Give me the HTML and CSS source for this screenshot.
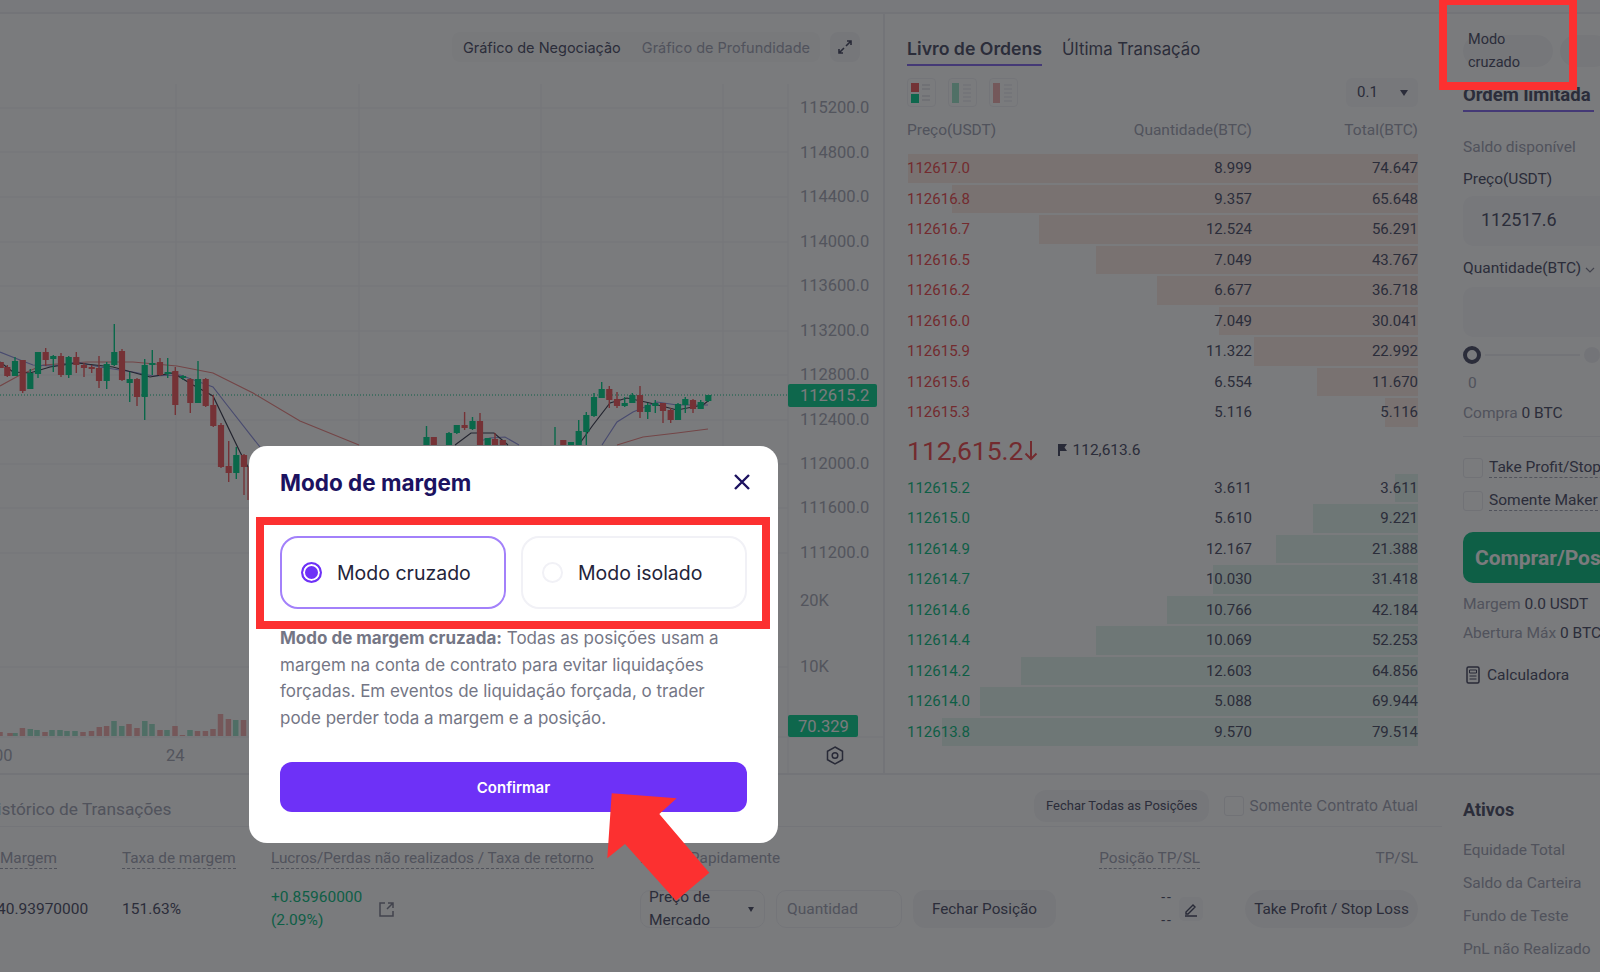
FILE: index.html
```html
<!DOCTYPE html>
<html lang="pt">
<head>
    <meta charset="UTF-8">
    <meta name="viewport" content="width=device-width, initial-scale=1.0">
    <title>Modo de margem</title>
    <link rel="stylesheet" href="styles.css">
</head>
<body>
    <div class="page">
        <div class="topbar"></div>

        <!-- Gráfico -->
        <section class="chart-panel">
            <div class="chart-head">
                <div class="chart-tabs">
                    <span class="chart-tab active">Gráfico de Negociação</span>
                    <span class="chart-tab">Gráfico de Profundidade</span>
                </div>
                <button class="expand">
                    <svg width="16" height="16" viewBox="0 0 16 16"><path d="M9 7l5-5M10 2h4v4M7 9l-5 5M2 10v4h4" fill="none" stroke="#55566e" stroke-width="1.6"/></svg>
                </button>
            </div>
            <svg class="chart" viewBox="0 84 885 689" width="885" height="689">
                <path class="grid" d="M176 84V737M359 84V737M541 84V737M723 84V737M0 108H788M0 152H788M0 197H788M0 242H788M0 286H788M0 331H788M0 375H788M0 420H788M0 464H788M0 508H788M0 553H788M0 667H788M0 737H885M788 84V773"/>
                <path class="vol-up" d="M15 736v-3M30.300 736v-7M37 736v-6M52 736v-6M60 736v-6M67 736v-5M75 736v-5M114 736v-15M121.800 736v-10M144.800 736v-15M152 736v-12M167 736v-6M190 736v-6M235.700 736v-16"/>
                <path class="vol-down" d="M0 736v-4M10 736v-3M22.400 736v-8M45 736v-4M83 736v-4M91.500 736v-5M99.300 736v-9M106.600 736v-10M129 736v-12M137 736v-8M160 736v-6M175 736v-10M182.400 736v-1M197.500 736v-5M205.400 736v-5M213 736v-7M220.500 736v-22M228.400 736v-17M243.500 736v-16"/>
                <path class="price-line" d="M0 395H788"/>
                <!-- médias móveis -->
                <path class="ma-red" d="M0 386L20 375 43 365 87 362 133 362 177 366 213 373 253 393 300 421 359 445M617 445L643 437 677 433 708 429"/>
                <path class="ma-blue" d="M0 352L20 360 33 365 53 366 77 362 100 367 133 372 153 376 180 375 213 387 227 405 260 447M477 442L490 438 505 437 519 445M602 445L617 422 633 412 657 402 677 405 708 405"/>
                <path class="ma-black" d="M0 362L13 372 30 373 50 367 77 363 113 367 150 377 173 373 193 385 213 396 240 452 248 467M455 445L471 433 494 433 508 445M580 443L593 425 610 403 627 398 650 403 677 410 703 405 708 401"/>
                <!-- velas -->
                <path class="wick-up" d="M15 357V376M30.300 369V389M38 352V378M53.300 355V372M68.700 356V378M106.700 362V389M114.300 324V366M129.700 372V402M144.700 359V420M152.300 350V375M167.700 358V378M183 375V380M198 361V403M236.300 447V479M426.500 426V445M449 432V445M456.800 425V434M472.500 417V430M487.700 438V445M555 427V445M578.700 420V445M586.300 412V445M594 393V417M601.700 382V398M624.700 397V407M632.300 393V403M647.700 403V419M655.300 400V413M678 403V420M685.300 397V413M700.700 400V409M708.300 395V402"/>
                <path class="body-up" d="M15 361V376M30.300 373V389M38 352V374M53.300 356V359M68.700 357V375M106.700 364V381M114.300 352V365M129.700 379V383M144.700 365V397M152.300 363V365M167.700 372V374M183 376V378M198 379V403M236.300 455V473M426.500 437V445M449 433V445M456.800 425V433M472.500 421V429M487.700 438V445M571 442V445M578.700 431V445M586.300 415V432M594 397V416M601.700 389V398M624.700 403V406M632.300 395V403M647.700 405V412M655.300 403V406M678 404V420M685.300 399V405M700.700 402V409M708.300 395V401"/>
                <path class="wick-down" d="M7.300 365V377M22.700 360V393M45.700 348V366M61 353V377M76.300 352V373M84 363V377M91.700 365V373M99 356V388M122 349V381M137 378V406M160 358V376M175.300 367V415M190.300 378V413M205.700 378V407M213.300 395V427M221 423V468M228.700 441V482M244 454V495M248 467V500M464.600 412V430M480 413V445M495 433V445M609.300 386V408M617 392V408M640 386V418M663 403V423M670.700 408V423M693 399V413"/>
                <path class="body-down" d="M0.700 362V368M7.300 367V376M22.700 360V391M45.700 352V360M61 356V375M76.300 357V365M84 365V368M91.700 367V369M99 368V381M122 351V380M137 379V397M160 362V375M175.300 371V405M190.300 379V403M205.700 379V406M213.300 405V426M221 425V467M228.700 466V473M244 455V467M433.800 437V445M464.600 425V428M480 421V445M495 439V445M502.800 440V445M563.300 440V445M609.300 389V400M617 399V406M640 395V412M663 403V411M670.700 410V420M693 400V409"/>
                <g class="axis">
                    <text x="800" y="113">115200.0</text>
                    <text x="800" y="158">114800.0</text>
                    <text x="800" y="202">114400.0</text>
                    <text x="800" y="247">114000.0</text>
                    <text x="800" y="291">113600.0</text>
                    <text x="800" y="336">113200.0</text>
                    <text x="800" y="380">112800.0</text>
                    <text x="800" y="425">112400.0</text>
                    <text x="800" y="469">112000.0</text>
                    <text x="800" y="513">111600.0</text>
                    <text x="800" y="558">111200.0</text>
                    <text x="800" y="606">20K</text>
                    <text x="800" y="672">10K</text>
                    <text x="-6" y="761">00</text>
                    <text x="166" y="761">24</text>
                </g>
                <rect class="tag" x="788" y="384" width="89" height="23" rx="2"/>
                <text class="tag-text" x="800" y="401">112615.2</text>
                <rect class="tag" x="788" y="715" width="70" height="22" rx="2"/>
                <text class="tag-text" x="798" y="732">70.329</text>
                <path class="gear" d="M835 747l7.500 4.300v8.400l-7.500 4.300-7.500-4.300v-8.400z"/>
                <circle class="gear" cx="835" cy="755.500" r="2.800"/>
            </svg>
        </section>

        <!-- Livro de ordens -->
        <section class="book-panel">
            <div class="book-tabs">
                <span class="book-tab active">Livro de Ordens</span>
                <span class="book-tab">Última Transação</span>
            </div>
            <div class="book-tools">
                <span class="view-btn"><svg width="29" height="29" viewBox="0 0 29 29"><rect x="4" y="5" width="8" height="9" fill="#f0696c"/><rect x="4" y="16" width="8" height="9" fill="#1fd69c"/><path d="M15 7h8M15 11h8M15 18h8M15 22h8" stroke="#e3e3ea" stroke-width="1.500"/></svg></span>
                <span class="view-btn"><svg width="29" height="29" viewBox="0 0 29 29"><rect x="4" y="5" width="7" height="20" fill="#a8e8d0"/><path d="M15 7h8M15 11h8M15 15h8M15 19h8M15 23h8" stroke="#eeeef3" stroke-width="1.500"/></svg></span>
                <span class="view-btn"><svg width="29" height="29" viewBox="0 0 29 29"><rect x="4" y="5" width="7" height="20" fill="#f3b6b6"/><path d="M15 7h8M15 11h8M15 15h8M15 19h8M15 23h8" stroke="#eeeef3" stroke-width="1.500"/></svg></span>
                <span class="step-select">0.1<i class="caret"></i></span>
            </div>
            <div class="book-row book-head">
                <span>Preço(USDT)</span><span>Quantidade(BTC)</span><span>Total(BTC)</span>
            </div>
            <div class="book-list asks">
                <div class="book-row"><i class="depth" style="width:510px"></i><span>112617.0</span><span>8.999</span><span>74.647</span></div>
                <div class="book-row"><i class="depth" style="width:466px"></i><span>112616.8</span><span>9.357</span><span>65.648</span></div>
                <div class="book-row"><i class="depth" style="width:379px"></i><span>112616.7</span><span>12.524</span><span>56.291</span></div>
                <div class="book-row"><i class="depth" style="width:322px"></i><span>112616.5</span><span>7.049</span><span>43.767</span></div>
                <div class="book-row"><i class="depth" style="width:261px"></i><span>112616.2</span><span>6.677</span><span>36.718</span></div>
                <div class="book-row"><i class="depth" style="width:199px"></i><span>112616.0</span><span>7.049</span><span>30.041</span></div>
                <div class="book-row"><i class="depth" style="width:164px"></i><span>112615.9</span><span>11.322</span><span>22.992</span></div>
                <div class="book-row"><i class="depth" style="width:101px"></i><span>112615.6</span><span>6.554</span><span>11.670</span></div>
                <div class="book-row"><i class="depth" style="width:33px"></i><span>112615.3</span><span>5.116</span><span>5.116</span></div>
            </div>
            <div class="book-mid">
                <span class="last-price">112,615.2</span>
                <svg width="16" height="24" viewBox="0 0 16 24"><path d="M8 3v18M2.500 15.500L8 21l5.500-5.500" fill="none" stroke="#f0595c" stroke-width="2"/></svg>
                <svg class="flag" width="10" height="12" viewBox="0 0 10 12"><path d="M1 0h9L7.500 3.500 10 7H3v5H1z" fill="#55566e"/></svg>
                <span class="mark-price">112,613.6</span>
            </div>
            <div class="book-list bids">
                <div class="book-row"><i class="depth" style="width:23px"></i><span>112615.2</span><span>3.611</span><span>3.611</span></div>
                <div class="book-row"><i class="depth" style="width:105px"></i><span>112615.0</span><span>5.610</span><span>9.221</span></div>
                <div class="book-row"><i class="depth" style="width:142px"></i><span>112614.9</span><span>12.167</span><span>21.388</span></div>
                <div class="book-row"><i class="depth" style="width:205px"></i><span>112614.7</span><span>10.030</span><span>31.418</span></div>
                <div class="book-row"><i class="depth" style="width:251px"></i><span>112614.6</span><span>10.766</span><span>42.184</span></div>
                <div class="book-row"><i class="depth" style="width:322px"></i><span>112614.4</span><span>10.069</span><span>52.253</span></div>
                <div class="book-row"><i class="depth" style="width:397px"></i><span>112614.2</span><span>12.603</span><span>64.856</span></div>
                <div class="book-row"><i class="depth" style="width:438px"></i><span>112614.0</span><span>5.088</span><span>69.944</span></div>
                <div class="book-row"><i class="depth" style="width:476px"></i><span>112613.8</span><span>9.570</span><span>79.514</span></div>
            </div>
        </section>

        <!-- Formulário de ordem -->
        <section class="form-panel">
            <div class="mode-row">
                <span class="mode-pill">Modo cruzado</span>
                <span class="mode-pill next"></span>
            </div>
            <div class="order-tab">Ordem limitada</div>
            <p class="muted balance">Saldo disponível</p>
            <p class="field-label">Preço(USDT)</p>
            <div class="field price">112517.6</div>
            <p class="field-label qty">Quantidade(BTC) <svg width="10" height="6" viewBox="0 0 10 6"><path d="M1 1l4 4 4-4" fill="none" stroke="#8a8b9c" stroke-width="1.200"/></svg></p>
            <div class="field"></div>
            <div class="slider"><i class="knob"></i><i class="track"></i><i class="dot"></i></div>
            <p class="muted zero">0</p>
            <p class="muted buy-line">Compra <b>0 BTC</b></p>
            <hr class="form-line">
            <label class="check-row"><i class="check"></i><span class="dashed">Take Profit/Stop Loss</span></label>
            <label class="check-row"><i class="check"></i><span class="dashed">Somente Maker</span></label>
            <button class="buy">Comprar/Posição Longa</button>
            <p class="muted info first">Margem <b>0.0 USDT</b></p>
            <p class="muted info">Abertura Máx <b>0 BTC</b></p>
            <p class="calc">
                <svg width="14" height="18" viewBox="0 0 14 18"><rect x="1" y="1" width="12" height="16" rx="1.500" fill="none" stroke="#55566e" stroke-width="1.500"/><path d="M3.500 4h7v3h-7zM3.500 10h7M3.500 13h7" fill="none" stroke="#55566e"/></svg>
                Calculadora
            </p>
        </section>

        <!-- Posições -->
        <section class="positions-panel">
            <div class="pos-head">
                <span class="pos-title">Histórico de Transações</span>
                <button class="close-all">Fechar Todas as Posições</button>
                <i class="check"></i>
                <span class="only-current">Somente Contrato Atual</span>
            </div>
            <div class="pos-grid pos-labels">
                <span><u>Margem</u></span>
                <span><u>Taxa de margem</u></span>
                <span><u>Lucros/Perdas não realizados / Taxa de retorno</u></span>
                <span>Fechar Rapidamente</span>
                <span class="right"><u>Posição TP/SL</u></span>
                <span class="right">TP/SL</span>
            </div>
            <div class="pos-grid pos-values">
                <span class="margin-value">40.93970000</span>
                <span>151.63%</span>
                <span class="pnl">
                    <span class="pnl-text">+0.85960000<br>(2.09%)</span>
                    <svg width="17" height="17" viewBox="0 0 17 17"><path d="M7 2H2v13h13v-5M9 8l6-6M10 2h5v5" fill="none" stroke="#8a8b9c" stroke-width="1.500"/></svg>
                </span>
                <span class="quick-close">
                    <span class="order-type"><span>Preço de Mercado</span><i class="caret"></i></span>
                    <span class="qty-input">Quantidad</span>
                    <button class="close-pos">Fechar Posição</button>
                </span>
                <span class="tp-cell">
                    <span class="dashes">--<br>--</span>
                    <span class="edit"><svg width="16" height="16" viewBox="0 0 16 16"><path d="M3 11l7-7 2 2-7 7H3zM2 15h12" fill="none" stroke="#55566e" stroke-width="1.400"/></svg></span>
                </span>
                <span class="right"><button class="tp-btn">Take Profit / Stop Loss</button></span>
            </div>
        </section>

        <!-- Ativos -->
        <section class="assets-panel">
            <h3>Ativos</h3>
            <p class="muted">Equidade Total</p>
            <p class="muted">Saldo da Carteira</p>
            <p class="muted">Fundo de Teste</p>
            <p class="muted">PnL não Realizado</p>
        </section>
    </div>

    <div class="overlay"></div>

    <div class="modal">
        <div class="modal-head">
            <h2>Modo de margem</h2>
            <svg width="18" height="18" viewBox="0 0 18 18"><path d="M2 2l14 14M16 2L2 16" stroke="#1c1260" stroke-width="2.400"/></svg>
        </div>
        <div class="mode-options">
            <div class="mode-option selected"><i class="radio"></i>Modo cruzado</div>
            <div class="mode-option"><i class="radio"></i>Modo isolado</div>
        </div>
        <p class="mode-text"><b>Modo de margem cruzada:</b> Todas as posições usam a margem na conta de contrato para evitar liquidações forçadas. Em eventos de liquidação forçada, o trader pode perder toda a margem e a posição.</p>
        <button class="confirm">Confirmar</button>
    </div>

    <!-- Marcações vermelhas -->
    <div class="mark mark-pill"></div>
    <div class="mark mark-options"></div>
    <svg class="arrow" width="115" height="120" viewBox="0 0 115 120"><path d="M11.700 8.300L76.700 13.300 59.300 29 109.300 87.700 76 115.700 25 59 7.300 73.300z" fill="#fc3030"/></svg>
</body>
</html>
```

FILE: styles.css
```css
/* Estilo global */
* {
    box-sizing: border-box;
}

html, body {
    margin: 0;
    height: 100%;
    overflow: hidden;
}

body {
    font-family: 'Inter', 'Liberation Sans', sans-serif;
    font-size: 15px;
    color: #5b5c74;
    background: #fff;
    position: relative;
}

p, h2, h3 {
    margin: 0;
    font-weight: normal;
}

button {
    font-family: inherit;
    border: none;
    cursor: pointer;
}

.page {
    display: grid;
    grid-template-columns: 885px 557px 158px;
    grid-template-rows: 14px 759px 199px;
    height: 972px;
    width: 1600px;
    background: #f1f1f4;
}

.topbar {
    grid-column: 1 / 4;
    background: #fbfbfc;
    border-bottom: 2px solid #f1f1f4;
}

section {
    background: #fff;
    overflow: hidden;
}

/* Gráfico */
.chart-panel {
    margin-right: 2px;
}

.chart-head {
    display: flex;
    justify-content: flex-end;
    align-items: center;
    gap: 10px;
    height: 70px;
    padding: 0 23px 4px 0;
}

.chart-tabs {
    display: flex;
    background: #fafafb;
    border-radius: 8px;
    height: 30px;
    align-items: center;
}

.chart-tab {
    padding: 0 10px;
    color: #a9abbb;
    font-size: 14.500px;
}

.chart-tab.active {
    color: #5b5c74;
    padding: 0 11px;
}

.expand {
    width: 30px;
    height: 30px;
    border-radius: 8px;
    background: #f7f7f9;
    display: flex;
    align-items: center;
    justify-content: center;
    padding: 0;
}

.chart {
    display: block;
}

.grid {
    stroke: #f3f3f6;
    fill: none;
}

.price-line {
    stroke: #1fc48e;
    stroke-dasharray: 1 2;
    fill: none;
}

.vol-up, .vol-down {
    stroke-width: 5.500;
    fill: none;
}

.vol-up {
    stroke: #a5e4cd;
}

.vol-down {
    stroke: #f5b5b5;
}

.ma-red, .ma-blue, .ma-black {
    fill: none;
    stroke-width: 1.200;
}

.ma-red {
    stroke: #f0908f;
}

.ma-blue {
    stroke: #9a9ce2;
}

.ma-black {
    stroke: #4a4b5c;
}

.wick-up, .body-up {
    stroke: #16d795;
    fill: none;
}

.wick-down, .body-down {
    stroke: #f4686c;
    fill: none;
}

.wick-up, .wick-down {
    stroke-width: 1.400;
}

.body-up, .body-down {
    stroke-width: 6.200;
}

.axis text {
    fill: #aeb0bc;
    font-size: 16.500px;
    font-family: 'Roboto', sans-serif;
}

.tag {
    fill: #1ed59a;
}

.tag-text {
    fill: #fff;
    font-size: 16.500px;
    font-family: 'Roboto', sans-serif;
}

.gear {
    fill: none;
    stroke: #55566e;
    stroke-width: 1.500;
}

/* Livro de ordens */
.book-panel {
    padding: 0 24px 0 22px;
}

.book-tabs {
    display: flex;
    gap: 20px;
    height: 52px;
    padding-top: 24px;
}

.book-tab {
    font-size: 16.800px;
    height: 28px;
    line-height: 22px;
    color: #5b5c74;
}

.book-tab.active {
    font-size: 17.700px;
    font-weight: 600;
    border-bottom: 2px solid #8f75f0;
}

.book-tools {
    display: flex;
    gap: 12px;
    height: 29px;
    margin-top: 12px;
    align-items: center;
}

.view-btn {
    width: 29px;
    height: 29px;
    border: 1px solid #f3f3f6;
    border-radius: 4px;
    display: block;
}

.view-btn svg {
    display: block;
    margin: -1px;
}

.step-select {
    margin-left: auto;
    width: 72px;
    height: 29px;
    line-height: 29px;
    padding-left: 11px;
    background: #f9f9fb;
    border-radius: 6px;
    font-family: 'Roboto', sans-serif;
    position: relative;
}

.caret {
    position: absolute;
    right: 10px;
    top: 12px;
    border-left: 4px solid transparent;
    border-right: 4px solid transparent;
    border-top: 6px solid #5b5c74;
}

.book-row {
    display: grid;
    grid-template-columns: 150px 195px 166px;
    align-items: center;
    height: 30.500px;
    position: relative;
    font-family: 'Roboto', sans-serif;
}

.book-row span {
    position: relative;
    text-align: right;
}

.book-row span:first-of-type {
    text-align: left;
}

.depth {
    position: absolute;
    right: 0;
    top: 1px;
    bottom: 1px;
}

.book-head {
    color: #a9abbb;
    font-size: 15.500px;
    margin-top: 7px;
    height: 31px;
    margin-bottom: 8px;
}

.asks .depth {
    background: #fcece7;
}

.bids .depth {
    background: #e6f6f0;
}

.asks span:first-of-type {
    color: #f0595c;
}

.bids span:first-of-type {
    color: #1ec48d;
}

.book-mid {
    display: flex;
    align-items: center;
    height: 41px;
    margin: 2px 0;
    font-family: 'Roboto', sans-serif;
}

.last-price {
    font-size: 26.500px;
    color: #f0595c;
}

.flag {
    margin-left: 18px;
    margin-right: 5px;
}

.mark-price {
    font-size: 15.500px;
}

/* Formulário de ordem */
.form-panel {
    padding: 0 0 0 21px;
    font-family: 'Roboto', sans-serif;
    font-size: 15.500px;
    white-space: nowrap;
}

.mode-row {
    display: flex;
    gap: 7px;
    height: 72px;
    padding-top: 21px;
}

.mode-pill {
    display: flex;
    align-items: center;
    width: 90px;
    height: 32px;
    background: #f7f7f9;
    border-radius: 16px;
    padding: 0 5px;
    white-space: normal;
    line-height: 23px;
    flex: none;
    font-size: 14.500px;
}

.mode-pill.next {
    width: 50px;
}

.order-tab {
    width: 131px;
    height: 26px;
    font-size: 18.500px;
    font-weight: 700;
    border-bottom: 2px solid #8f75f0;
    line-height: 18px;
}

.muted {
    color: #a9abbb;
}

.muted b {
    color: #5b5c74;
    font-weight: normal;
}

.balance {
    margin-top: 26px;
}

.field-label {
    margin-top: 14px;
}

.field-label.qty {
    margin-top: 13px;
}

.field {
    height: 50px;
    margin-top: 8px;
    background: #f9f9fb;
    border-radius: 10px;
    width: 200px;
    padding-left: 18px;
    line-height: 48px;
    font-size: 18px;
}

.field-label.qty + .field {
    margin-top: 10px;
}

.slider {
    display: flex;
    align-items: center;
    height: 18px;
    margin-top: 9px;
    gap: 4px;
}

.knob {
    width: 18px;
    height: 18px;
    border-radius: 50%;
    border: 4px solid #5b5c74;
    flex: none;
}

.track {
    width: 100px;
    height: 2px;
    background: #f1f1f4;
}

.dot {
    width: 16px;
    height: 16px;
    border-radius: 50%;
    background: #f1f1f4;
    flex: none;
}

.zero {
    margin-top: 10px;
    padding-left: 5px;
}

.buy-line {
    margin-top: 12px;
}

.form-line {
    border: none;
    height: 1px;
    background: #f1f1f4;
    margin: 14px 0 21px;
}

.check-row {
    display: flex;
    align-items: center;
    gap: 6px;
    height: 20px;
    margin-bottom: 13px;
}

.check {
    display: block;
    width: 20px;
    height: 20px;
    border: 1px solid #ececf0;
    border-radius: 3px;
    flex: none;
}

.dashed, u {
    text-decoration: none;
    border-bottom: 1px dashed #a9abbb;
    padding-bottom: 1px;
}

.buy {
    display: block;
    width: 220px;
    height: 51px;
    margin-top: 21px;
    background: #1fc48d;
    border-radius: 10px;
    color: #fff;
    font-size: 21px;
    font-weight: 700;
    text-align: left;
    padding-left: 12px;
    white-space: nowrap;
}

.info {
    margin-top: 11px;
}

.info.first {
    margin-top: 12px;
}

.calc {
    display: flex;
    align-items: center;
    gap: 7px;
    margin-top: 24px;
    padding-left: 3px;
}

/* Posições */
.positions-panel {
    grid-column: 1 / 3;
    padding-right: 24px;
    margin-top: 2px;
}

.pos-head {
    display: flex;
    align-items: center;
    height: 52px;
    padding: 10px 24px 0 0;
    border-bottom: 1px solid #f3f3f6;
    margin-right: -24px;
}

.pos-title {
    margin-left: -15px;
    margin-top: 6px;
    font-family: 'Roboto', sans-serif;
    font-size: 17.300px;
    color: #a9abbb;
    margin-right: auto;
}

.close-all {
    height: 32px;
    width: 175px;
    padding: 0;
    background: #f7f7f9;
    border-radius: 12px;
    font-family: 'Roboto', sans-serif;
    font-size: 13px;
    color: #5b5c74;
    margin-right: 15px;
}

.only-current {
    margin-left: 5px;
    font-size: 15px;
    color: #a9abbb;
}

.pos-grid {
    display: grid;
    grid-template-columns: 122px 149px 369px 416px 144px 218px;
    align-items: center;
}

.pos-labels {
    height: 59px;
    padding-top: 3px;
    color: #a9abbb;
    font-size: 15.300px;
    font-family: 'Roboto', sans-serif;
}

.pos-values {
    height: 46px;
    font-family: 'Roboto', sans-serif;
    font-size: 15.500px;
}

.right {
    text-align: right;
}

.margin-value {
    margin-left: -3px;
}

.pnl {
    display: flex;
    align-items: center;
    gap: 16px;
}

.pnl-text {
    color: #1ec48d;
    line-height: 23px;
}

.quick-close {
    display: flex;
    align-items: center;
    gap: 11px;
}

.order-type {
    display: flex;
    align-items: center;
    position: relative;
    width: 125px;
    height: 38px;
    line-height: 23px;
    padding: 0 30px 0 8px;
    border: 1px solid #f3f3f6;
    border-radius: 10px;
}

.order-type .caret {
    top: 16px;
    border-left-width: 3px;
    border-right-width: 3px;
    border-top-width: 5px;
}

.qty-input {
    width: 126px;
    height: 38px;
    line-height: 36px;
    padding-left: 10px;
    border: 1px solid #f3f3f6;
    border-radius: 10px;
    color: #a9abbb;
}

.close-pos {
    width: 143px;
    height: 38px;
    padding: 0;
    background: #f7f7f9;
    border-radius: 12px;
    font-size: 15.300px;
    color: #5b5c74;
}

.tp-cell {
    display: flex;
    justify-content: flex-end;
    align-items: center;
    gap: 6px;
    margin-right: -3px;
}

.dashes {
    line-height: 23px;
    font-size: 14px;
    letter-spacing: 2px;
}

.edit {
    width: 24px;
    height: 24px;
    background: #f9f9fb;
    border-radius: 5px;
    display: flex;
    align-items: center;
    justify-content: center;
}

.tp-btn {
    width: 173px;
    height: 38px;
    padding: 0;
    background: #f7f7f9;
    border-radius: 19px;
    font-size: 15.300px;
    color: #5b5c74;
}

/* Ativos */
.assets-panel {
    padding: 24px 0 0 21px;
    margin-top: 2px;
    font-family: 'Roboto', sans-serif;
    font-size: 15.500px;
    white-space: nowrap;
}

.assets-panel h3 {
    font-size: 18px;
    font-weight: 700;
    margin-bottom: 21px;
}

.assets-panel p {
    height: 33px;
}

/* Modal */
.overlay {
    position: fixed;
    inset: 0;
    background: rgba(0, 2, 5, 0.52);
}

.modal {
    position: absolute;
    left: 249px;
    top: 446px;
    width: 529px;
    height: 397px;
    padding: 0 31px;
    background: #fff;
    border-radius: 18px;
}

.modal-head {
    display: flex;
    justify-content: space-between;
    align-items: center;
    height: 72px;
}

.modal-head h2 {
    font-size: 22.500px;
    font-weight: 700;
    color: #1c1260;
}

.modal-head svg {
    margin-right: -4px;
}

.mode-options {
    display: grid;
    grid-template-columns: 226px 226px;
    gap: 15px;
    margin-top: 18px;
}

.mode-option {
    display: flex;
    align-items: center;
    gap: 15px;
    height: 73px;
    padding-left: 19px;
    border: 2px solid #f1f1f6;
    border-radius: 18px;
    font-size: 19.500px;
    color: #24243a;
}

.mode-option.selected {
    border-color: #a381fa;
}

.radio {
    display: block;
    width: 21px;
    height: 21px;
    border-radius: 50%;
    border: 2px solid #f1f1f6;
}

.selected .radio {
    border-color: #6e31f7;
    background: #6e31f7;
    box-shadow: inset 0 0 0 2px #fff;
}

.mode-text {
    margin-top: 16px;
    font-size: 17px;
    line-height: 26.600px;
    color: #747685;
}

.mode-text b {
    font-weight: 700;
}

.confirm {
    display: block;
    width: 467px;
    height: 50px;
    margin-top: 31px;
    background: #6e31f7;
    border-radius: 12px;
    color: #fff;
    font-size: 15px;
    font-weight: 600;
}

/* Marcações */
.mark {
    position: absolute;
    border: 8px solid #fc3030;
}

.mark-pill {
    left: 1439px;
    top: -3px;
    width: 138px;
    height: 93px;
}

.mark-options {
    left: 256px;
    top: 517px;
    width: 514px;
    height: 112px;
}

.arrow {
    position: absolute;
    left: 600px;
    top: 785px;
}
```
